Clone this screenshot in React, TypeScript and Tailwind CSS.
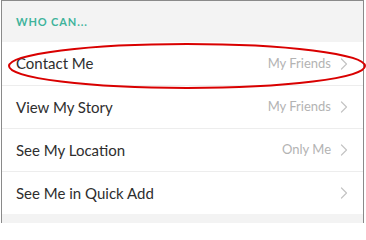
import React from "react"

const rows = [
  { label: "Contact Me", value: "My Friends" },
  { label: "View My Story", value: "My Friends" },
  { label: "See My Location", value: "Only Me" },
  { label: "See Me in Quick Add", value: "" },
]

function Chevron() {
  return (
    <svg width="8" height="12" viewBox="0 0 8 12" fill="none" className="ml-[9px]">
      <path d="M1.5 1l5 5-5 5" stroke="#c4c4c4" strokeWidth="1.2" strokeLinecap="round" strokeLinejoin="round" />
    </svg>
  )
}

export default function App() {
  return (
    <div className="h-[227px] w-[366px] bg-white" style={{ fontFamily: "Lato, 'Open Sans', sans-serif" }}>
      <div className="relative ml-px h-[223px] w-[363px] border border-[#8a8a8a] bg-white">
        {/* Section header */}
        <div className="flex h-[41px] items-center bg-[#f3f3f3] pl-[14px] pt-[2px]">
          <span className="text-[11px] font-bold tracking-[0.08em] text-[#3fb39c]">WHO CAN...</span>
        </div>

        {rows.map((row, i) => (
          <div
            key={row.label}
            className={`flex h-[43px] items-center pl-[14px] pr-[15px] ${i > 0 ? "border-t border-[#ededed]" : ""}`}
          >
            <span className="text-[15px] text-[#2e2e2e]">{row.label}</span>
            <span className="ml-auto text-[13px] text-[#b3b3b3]">{row.value}</span>
            <Chevron />
          </div>
        ))}

        <div className="h-[9px] bg-[#f3f3f3]" />

        {/* Red annotation ellipse */}
        <svg className="pointer-events-none absolute left-0 top-0" width="366" height="227" viewBox="-1 -1 366 227">
          <ellipse cx="184" cy="64" rx="178" ry="22" fill="none" stroke="#d90000" strokeWidth="2" />
        </svg>
      </div>
    </div>
  )
}
